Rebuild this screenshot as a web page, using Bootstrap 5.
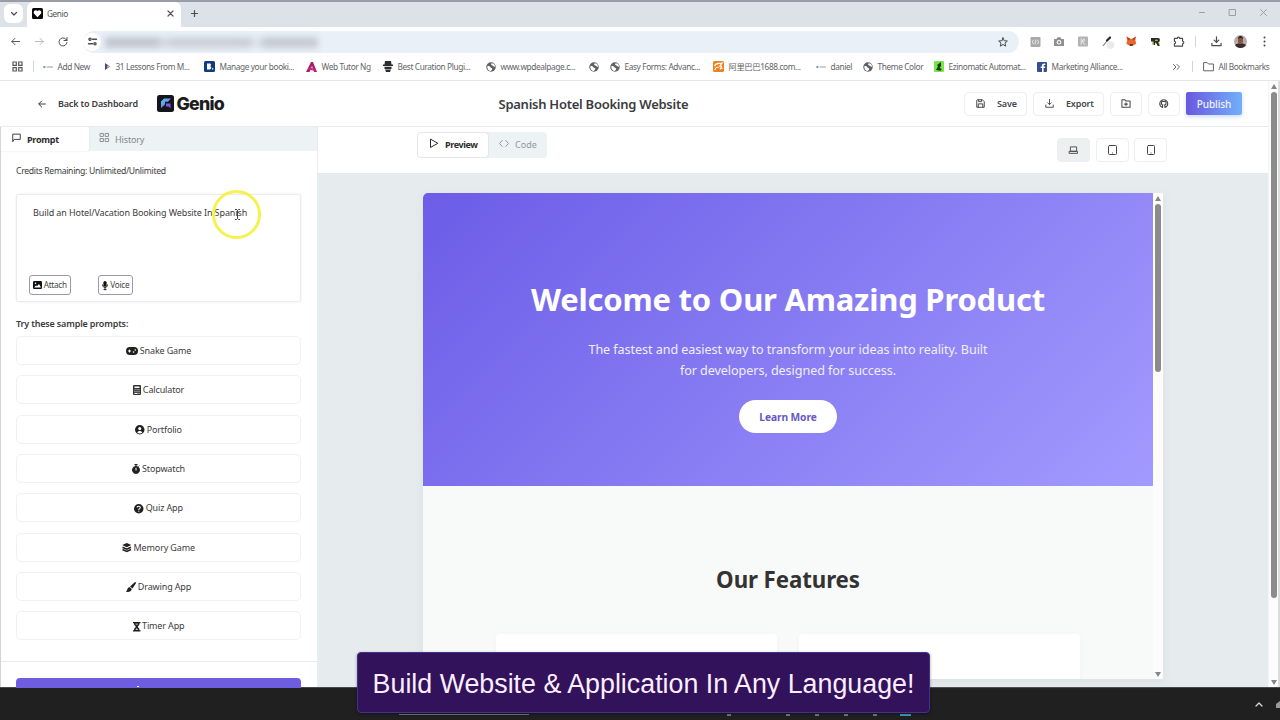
<!DOCTYPE html>
<html lang="en">
<head>
<meta charset="utf-8">
<title>Genio</title>
<link href="https://cdn.jsdelivr.net/npm/bootstrap@5.3.0/dist/css/bootstrap.min.css" rel="stylesheet">
<script src="https://cdn.jsdelivr.net/npm/bootstrap@5.3.0/dist/js/bootstrap.bundle.min.js"></script>
<style>
body{width:1280px;height:720px;overflow:hidden;font-family:"Noto Sans","Noto Sans CJK SC",sans-serif;font-size:9px;line-height:14px;color:#3c3c3c;background:#fff}
svg{display:block;flex:none;overflow:visible}
.ln{fill:none;stroke:currentColor;stroke-width:2;stroke-linecap:round;stroke-linejoin:round}
.browser{border-top:2px solid #9a9da5;height:81px;border-bottom:1px solid #e4e6e8;color:#4a4c4f}
.tabstrip{height:25px;background:#dde1e8}
.tabmenu{width:19px;height:19px;margin:2px 4px 0 4px;background:#fff;border-radius:6px}
.tab-active{width:154px;height:25px;background:#fff;border-radius:6px 6px 0 0;padding:0 8px 2px 5px;font-size:8.3px;letter-spacing:-.45px;color:#555}
.wctl{color:#9b9ea5;width:30.7px}
.wctl.last{width:20px}
.thin{stroke-width:1}
.mid{stroke-width:1.2}
.addr-row{height:29px;padding-left:3px}
.nav-ic{width:24px}
.nav-ic.off{color:#b4b6b9}
.addr{width:936px;height:22px;background:#eaf0f7;border-radius:11px;padding-left:0;padding-right:11px}
.site-ic{width:18px;height:18px;border-radius:50%;background:#fff}
.smudge{width:213px;height:11px;margin:2px 0 0 4px;filter:blur(3px);background:linear-gradient(90deg,#c2c7cf 0 24%,#d5dae2 27% 29%,#ccd1d9 32% 58%,#cbd0d8 60% 68%,#dfe5ec 70% 72%,#c6cbd3 75%)}
.ext-ic{width:24px}
.ext-row{margin-left:4px}
.bookmarks{height:21px;display:grid;grid-template-columns:12px 21px 10px 61px 100px 102px 77px 103px 103px 21px 103px 103px 47px 71px 103px 136px 19px 11px 1fr;font-size:8.3px;letter-spacing:-.38px;color:#626467;white-space:nowrap}
.bookmarks>*{display:flex;align-items:center;gap:4.5px}
.vsep{width:1px;height:11px;background:#cfd6df}
.app-head{height:46px;border-bottom:1px solid #e9eaec;font-weight:600;letter-spacing:-.17px;color:#3a3c3e}
.head-title{font-size:13px;letter-spacing:-.26px;left:498.5px;top:14px;line-height:18px}
.logo-text{font:800 17.8px/20px Inter,sans-serif;letter-spacing:-.8px;color:#1c1d21}
.obtn{height:24px;border:1px solid #eceef1;border-radius:4px;background:#fff;color:#444648}
.publish{width:56px;height:23px;background:linear-gradient(90deg,#6a57dd,#71b0fb);color:#f3f2ff;font-size:10px;font-weight:500;letter-spacing:-.12px;border-radius:2px;box-shadow:0 2px 4px #8ab0ec70}
.work{height:560px}
.side{width:318px;border-left:1px solid #d3d5d8;border-right:1px solid #e9ecee}
.tabs-row{height:24px;background:#edf2f5}
.tab-on{width:88px;background:#fff;box-shadow:0 0 2px #d6dbe0;border-radius:0 0 3px 0;font-weight:700;color:#2c2c2c;letter-spacing:-.25px;padding-top:1px}
.tab-off{color:#83888d;padding:1px 0 0 11px;letter-spacing:-.14px}
.credits{font-size:8.6px;letter-spacing:-.29px}
.prompt-box{height:108px;border:1px solid #eaecf0;border-radius:2px;box-shadow:0 0 2px #e6e8ee;letter-spacing:-.1px}
.mini{height:20px;border:1px solid #9a9ba6;border-radius:3px;font-size:8.2px;letter-spacing:-.27px;color:#444}
.sample{height:29px;border:1px solid #f0f1f3;border-radius:5px;gap:2px;letter-spacing:-.14px;margin-bottom:10.33px;padding-top:1px}
.sample svg{color:#202020}
.gen{height:10px;background:#6f5de0;border-radius:4px 4px 0 0}
.side-foot{border-top:1px solid #e8eaed;padding:16px 16px 0 15px;height:26px}
.view-bar{height:46px;background:#fff}
.seg{height:26px;margin:5px 0 0 99px;background:#edf2f4;border-radius:4px}
.seg-on{width:72px;border:1px solid #e4e7ea;background:#fff;border-radius:4px;font-weight:700;color:#2c2c2c;letter-spacing:-.4px}
.seg-off{width:58px;color:#93989b;padding-left:10px;letter-spacing:0}
.dev{width:33px;height:24px}
.dev.sel{background:#edf0f1}
.stage{background:#e6ebee;height:514px;padding:20px 0 0 105px}
.frame{width:740px;height:486px;background:#f8f9f9;border-radius:5px 0 0 0;overflow:hidden;box-shadow:0 3px 8px #c9ced260}
.hero{width:730px;height:293px;background:linear-gradient(135deg,#6c5ce7,#a29bfe);color:#fff;padding-top:86px}
.hero h1{font-size:31px;line-height:40px;font-weight:700;letter-spacing:-.22px;margin:0 0 19.5px}
.hero p{font-size:12.6px;line-height:21.4px;letter-spacing:-.07px;margin:0 0 18.5px;color:#f0eeff}
.cta{width:98px;height:33px;border-radius:17px;background:#fff;color:#6657c4;font-weight:700;font-size:10.2px;letter-spacing:-.08px;padding-top:1px}
.feat{width:730px;padding-top:78px}
.feat h2{font-size:22.3px;line-height:32px;font-weight:700;letter-spacing:-.1px;margin:0 0 38px;color:#333}
.fcard{width:281px;height:60px;background:#fff;border-radius:4px;box-shadow:0 1px 4px #00000008}
.sb{width:10px;background:#fcfcfc}
.sb.page{border-left:1px solid #f2f4f5}
.thumb{width:6px;border-radius:3px;background:#8b8b8b}
.arr{width:0;height:0;border:3px solid transparent;border-top:0;border-bottom:5px solid #858585}
.arr.dn{transform:rotate(180deg)}
.edge{width:2px;background:#dcdcdc}
.taskbar{height:33px;background:#202021;border-top:1px solid #48494a}
.caption-box{left:357px;top:652px;width:573px;height:61px;border:1px solid #46308a;border-radius:4px;background:#31125b;color:#fceeff;font:26.8px/62px "Liberation Sans",Arial,sans-serif;white-space:nowrap;box-shadow:0 1px 3px #0006}
.click-ring{left:212px;top:190px;width:49px;height:49px;border:3px solid #f4f03c;border-radius:50%;opacity:.9}
.ibeam{left:234px;top:209px}
.tick{height:2px;width:4px;background:#77787a;top:714px}
</style>
</head>
<body>
<svg width="0" height="0" class="position-absolute">
<defs>
<symbol id="globe" viewBox="0 0 16 16"><circle cx="8" cy="8" r="7.6" fill="#5f6164"/><path d="M2 7c2-1 4 0 5 1.500s3 1 3 2.500-2 2-2 3.500C4 14 2 11 2 7zM9 2c3 0 5 2 5.500 5-1.500 1-3 0-3.500-1S8 5 8 4z" fill="#fff"/></symbol>
<symbol id="dash" viewBox="0 0 11 4"><path d="M0 2h3M4 2h7" stroke="#8494a0" stroke-width="1"/><path d="M0 2l2-1.500v3z" fill="#6a8796"/></symbol>
</defs>
</svg>

<header class="browser">
  <div class="tabstrip d-flex">
    <div class="tabmenu d-flex align-items-center justify-content-center"><svg width="6" height="4" viewBox="0 0 6 4" class="ln mid"><path d="M.5.5 3 3 5.500.5"/></svg></div>
    <div class="tab-active d-flex align-items-center">
      <svg width="11" height="11" viewBox="0 0 11 11"><rect width="11" height="11" rx="1.500" fill="#080808"/><path d="M5.500 9.300 1.900 5.400C.8 3.300 3.500 1 5.500 2.900c2-1.900 4.700.4 3.600 2.500z" fill="#fff"/></svg>
      <span class="ms-1">Genio</span>
      <svg class="ms-auto ln mid" width="5" height="5" viewBox="0 0 5 5"><path d="M0 0l5 5M5 0 0 5"/></svg>
    </div>
    <svg class="ln mid align-self-center ms-2" width="9" height="9" viewBox="-2 0 9 9"><path d="M3.500.5v6M.5 3.500h6"/></svg>
    <div class="ms-auto d-flex align-items-center pb-1">
      <div class="wctl"><svg width="7" height="7" viewBox="0 0 7 7" class="ln thin"><path d="M.5 3.500h5"/></svg></div>
      <div class="wctl"><svg width="7" height="7" viewBox="0 0 7 7" class="ln thin"><path d="M.5.5h6v6h-6z"/></svg></div>
      <div class="wctl last"><svg width="7" height="7" viewBox="0 0 7 7" class="ln thin"><path d="M.5.5l6 6m0-6-6 6"/></svg></div>
    </div>
  </div>
  <div class="addr-row d-flex align-items-center">
    <div class="nav-ic d-flex justify-content-center"><svg width="11" height="11" viewBox="0 0 24 24" class="ln"><path d="M21 12H4m7-7-7 7 7 7"/></svg></div>
    <div class="nav-ic off d-flex justify-content-center"><svg width="11" height="11" viewBox="0 0 24 24" class="ln"><path d="M3 12h17m-7-7 7 7-7 7"/></svg></div>
    <div class="nav-ic d-flex justify-content-center"><svg width="12" height="12" viewBox="0 0 24 24" class="ln"><path d="M20 13a8 8 0 1 1-2.500-7L20 8.500M20 3v6h-6"/></svg></div>
    <div class="addr d-flex align-items-center ms-2">
      <div class="site-ic d-flex align-items-center justify-content-center"><svg width="9" height="9" viewBox="0 0 20 20" class="ln"><circle cx="4.500" cy="5" r="2.500" stroke-width="2.800"/><path d="M10 5h9M1 15h9" stroke-width="2.800"/><circle cx="15.500" cy="15" r="2.500" stroke-width="2.800"/></svg></div>
      <div class="smudge"></div>
      <svg class="ms-auto ln" width="10" height="10" viewBox="0 0 24 24"><path d="m12 2 3 7 7.500.6-5.700 5 1.700 7.400-6.500-4-6.500 4 1.700-7.400-5.700-5L9 9z" stroke-width="2.400"/></svg>
    </div>
    <div class="ext-row d-flex align-items-center">
      <div class="ext-ic d-flex justify-content-center"><svg width="11" height="10" viewBox="0 0 11 11"><rect width="11" height="11" rx="1" fill="#a9a9ab"/><path d="M3.500 3 2 5.500 3.500 8M7.500 3 9 5.500 7.500 8M6 3 5 8" stroke="#eee" fill="none"/></svg></div>
      <div class="ext-ic d-flex justify-content-center"><svg width="10" height="9" viewBox="0 0 10 9"><path d="M0 2h2.500L3.500.3h3L7.500 2H10v7H0z" fill="#8e9092"/><circle cx="5" cy="5.200" r="2.300" fill="#fff"/><circle cx="5" cy="5.200" r="1.200" fill="#8e9092"/></svg></div>
      <div class="ext-ic d-flex justify-content-center"><svg width="10" height="11" viewBox="0 0 11 11"><rect width="11" height="11" rx="1" fill="#b3b3b4"/><path d="M3.500 2v7M4 5.500l2.500-3 1 2-3 1.500 3.500 3" stroke="#eee" fill="none"/></svg></div>
      <div class="ext-ic d-flex justify-content-center"><svg width="11" height="12" viewBox="0 0 11 12"><circle cx="8.500" cy="9" r="3.800" fill="#e9eaec"/><path d="M1 10 6 3.500" stroke="#7a8795" stroke-width="1.200"/><path d="M5 4.500 8 1.500" stroke="#25282c" stroke-width="2.200" stroke-linecap="round"/></svg></div>
      <div class="ext-ic d-flex justify-content-center"><svg width="10.500" height="10.500" viewBox="0 0 11 11"><path d="M.5.500 4.300 3h2.400L10.500.500l-.7 4 .9 3.500-3 2H3.300l-3-2 .9-3.500z" fill="#e8682b"/><path d="M.5.500 4.300 3 3 5zM10.500.500 6.700 3 8 5z" fill="#a8401a"/><path d="M4 8.500h3v1.800H4z" fill="#4a2a20"/></svg></div>
      <div class="ext-ic d-flex justify-content-center"><svg width="9" height="9" viewBox="0 0 10 10"><path d="M1 5h3l-2.500 4H1zM8 6l2 1v3H8z" fill="#bfd843"/><path d="M0 1h7.500c2 0 2.500 1 2.300 2.500S9 5.800 8 6l1.500 4h-2L5.500 6.500H4.700L4.500 9H2.800V5H0z" fill="#272d20"/><path d="M4.500 3h3v1.300h-3z" fill="#b9c0b5"/></svg></div>
      <div class="ext-ic d-flex justify-content-center"><svg width="11.500" height="11.500" viewBox="0 0 24 24" class="ln"><path d="M3 5h6a2.500 2.500 0 0 1 5 0h6v6a2.500 2.500 0 0 1 0 5v5H3v-5a2.500 2.500 0 0 0 0-5z" stroke-width="2.400"/></svg></div>
      <div class="vsep mx-1"></div>
      <div class="ext-ic d-flex justify-content-center ms-1"><svg width="11" height="11" viewBox="0 0 24 24" class="ln"><path d="M12 2v12m-5-5 5 5 5-5M2 16v5h20v-5" stroke-width="2.600"/></svg></div>
      <div class="ext-ic d-flex justify-content-center"><svg width="13" height="13" viewBox="0 0 13 13"><circle cx="6.500" cy="6.500" r="6.500" fill="#b9aca6"/><path d="M1 10c2-2.500 9-2.500 11 0-2 4-9 4-11 0z" fill="#3a2b30"/><ellipse cx="6.500" cy="5.300" rx="2.600" ry="3.600" fill="#8a5747"/><path d="M3.800 4C4 0 9 0 9.200 4 8 2.500 5 2.500 3.800 4z" fill="#2b2020"/></svg></div>
      <div class="ext-ic d-flex justify-content-center"><svg width="3" height="11" viewBox="0 0 3 11" fill="#444"><circle cx="1.500" cy="1.500" r="1"/><circle cx="1.500" cy="5.500" r="1"/><circle cx="1.500" cy="9.500" r="1"/></svg></div>
    </div>
  </div>
  <nav class="bookmarks">
    <span></span>
    <span><svg width="11" height="11" viewBox="0 0 11 11" fill="none" stroke="#55575a" stroke-width="1.200"><path d="M1 1h3.300v3.300H1zM6.700 1H10v3.300H6.700zM1 6.700h3.300V10H1zM6.700 6.700H10V10H6.700z"/></svg></span>
    <span><i class="vsep"></i></span>
    <span><svg width="10" height="4"><use href="#dash"/></svg>Add New</span>
    <span><svg width="7" height="7" viewBox="0 0 7 7"><path d="M1 0l5 3.500L1 7z" fill="#4d3ea8"/><path d="M3 2.500 6 3.500 3 5z" fill="#f1b52c"/></svg>31 Lessons From M...</span>
    <span><svg width="11" height="11" viewBox="0 0 11 11"><rect width="11" height="11" rx="1.500" fill="#113a80"/><path d="M3 2.500h2.400c2 0 2 2.300.6 2.700 2 .5 1.500 3.300-.7 3.300H3zM8 7.200h1.300v1.300H8z" fill="#fff"/></svg>Manage your booki...</span>
    <span><svg width="11" height="10" viewBox="0 0 11 10"><path d="M0 10 5 0h2l4 10H8L6 4 3.500 10z" fill="#a81f68"/><path d="M2 6c3-1 6 0 8 3L4 8z" fill="#cf2e7d"/></svg>Web Tutor Ng</span>
    <span><svg width="10" height="11" viewBox="0 0 10 11" fill="#2c2d2f"><path d="M2 0h6l.5 3.500H10V5H0V3.500h1.500zM1.500 5.700h7V8h-7zM2 8.500h6L7 11H3z"/></svg>Best Curation Plugi...</span>
    <span><svg width="10" height="10"><use href="#globe"/></svg>www.wpdealpage.c...</span>
    <span><svg width="10" height="10"><use href="#globe"/></svg></span>
    <span><svg width="10" height="10"><use href="#globe"/></svg>Easy Forms: Advanc...</span>
    <span><svg width="11" height="11" viewBox="0 0 11 11"><rect width="11" height="11" rx="1.500" fill="#ee8223"/><path d="M1.500 5C3 1.500 6 3 9 2L7 5c2-.5 2 1 0 3l2.500-1M2 9c0-2 2-3 4-3" fill="none" stroke="#fff" stroke-width="1.200"/></svg>阿里巴巴1688.com...</span>
    <span><svg width="10" height="4"><use href="#dash"/></svg>daniel</span>
    <span><svg width="10" height="10"><use href="#globe"/></svg>Theme Color</span>
    <span><svg width="10" height="11" viewBox="0 0 10 11"><rect width="10" height="11" rx="1" fill="#7ce34c"/><path d="M7 1 3 4l1 1.500L2 9l5 .7.7-2L5.500 7 7 5z" fill="#163d12"/></svg>Ezinomatic Automat...</span>
    <span><svg width="10" height="10" viewBox="0 0 10 10"><rect width="10" height="10" rx="1" fill="#34508f"/><path d="M5 10V6H3.700V4.600H5V3.500C5 2 6 1.300 8.300 1.700V3c-1.300-.1-1.700 0-1.700 1.600h1.600L8 6H6.600v4z" fill="#fff"/></svg>Marketing Alliance...</span>
    <span><svg width="7" height="6" viewBox="0 0 7 6" class="ln thin"><path d="M.5.500 3 3 .5 5.500M4 .500 6.500 3 4 5.500"/></svg></span>
    <span><i class="vsep"></i></span>
    <span><svg width="11" height="9" viewBox="0 0 11 9" class="ln thin"><path d="M.6 8.400V.600h3.600L5.500 2h4.900v6.400z"/></svg>All Bookmarks</span>
  </nav>
</header>

<div class="d-flex">
<main style="width:1268px">
  <div class="app-head d-flex align-items-center position-relative">
    <svg class="ln" width="8" height="8" viewBox="0 0 24 24" style="margin-left:38px"><path d="M22 12H3m8-9-9 9 9 9" stroke-width="3"/></svg>
    <span style="margin-left:12px;width:99px">Back to Dashboard</span>
    <svg width="17" height="17" viewBox="0 0 17 17"><defs><linearGradient id="lg" x1="0" y1="0" x2="1" y2="1"><stop offset=".2" stop-color="#56b9ec"/><stop offset="1" stop-color="#8d4fe0"/></linearGradient></defs><rect width="17" height="17" rx="2.500" fill="#14151d"/><path d="M4 13V6.500L7 3.500h7l-3 3.300H8V9.500z" fill="url(#lg)"/><path d="M9 8.500h4.500V13.500L11.500 11.500H9z" fill="#7e5be4"/></svg>
    <span class="logo-text" style="margin-left:2.500px">Genio</span>
    <div class="head-title position-absolute">Spanish Hotel Booking Website</div>
    <div class="ms-auto d-flex align-items-center" style="margin-right:26px;gap:6px">
      <div class="obtn d-flex align-items-center" style="width:63px;padding-left:11px"><svg class="ln" width="9" height="9" viewBox="0 0 24 24"><path d="M4 2h13l5 5v15H2V4zM7 2v5h8V2M6 22v-9h12v9" stroke-width="2.600"/></svg><span style="margin-left:12px">Save</span></div>
      <div class="obtn d-flex align-items-center" style="width:71px;padding-left:11px"><svg class="ln" width="9" height="9" viewBox="0 0 24 24"><path d="M12 1v14m-5-5 5 5 5-5M2 16v6h20v-6" stroke-width="2.500"/></svg><span style="margin-left:12px">Export</span></div>
      <div class="obtn d-flex align-items-center justify-content-center" style="width:32px"><svg class="ln" width="10" height="9" viewBox="0 0 24 22"><path d="M2 20V2h7l3 3h10v15zM12 9v7m-3.500-3.500h7" stroke-width="2.500"/></svg></div>
      <div class="obtn d-flex align-items-center justify-content-center" style="width:32px"><svg width="9.500" height="9.500" viewBox="0 0 24 24" class="ln"><path d="M9 21.500C5 20 2 17 2 12a10 10 0 0 1 20 0c0 5-3 8-7 9.500V18c0-1.500-.5-2.500-1-3 3-.5 4-2 4-4.500 0-1.500-.5-2.500-1-3V5l-3 1.300h-4L7 5v2.500c-.5.500-1 1.500-1 3C6 13 7 14.500 10 15c-.5.500-1 1.500-1 3z" fill="none" stroke-width="2.800"/></svg></div>
      <div class="publish d-flex align-items-center justify-content-center">Publish</div>
    </div>
  </div>

  <div class="work d-flex">
    <aside class="side d-flex flex-column">
      <div class="tabs-row d-flex">
        <div class="tab-on d-flex align-items-center"><svg class="ln" width="9" height="9" viewBox="0 0 24 24" style="margin:-5px 6px 0 11px"><path d="M2 22V3h20v14H7z" stroke-width="2.400"/></svg>Prompt</div>
        <div class="tab-off d-flex align-items-center"><svg class="ln thin" width="9" height="9" viewBox="0 0 10 10" style="margin:-5px 6px 0 0"><path d="M.5.500h3.300v3.300H.500zM6.200.500h3.300v3.300H6.200zM.5 6.200h3.300v3.300H.500zM6.200 6.200h3.300v3.300H6.200z"/></svg>History</div>
      </div>
      <div style="padding:13px 16px 0 15px">
        <div class="credits">Credits Remaining: Unlimited/Unlimited</div>
        <div class="prompt-box d-flex flex-column justify-content-between" style="margin-top:16px;padding:10.500px 12px 6px">
          <div style="padding-left:4px">Build an Hotel/Vacation Booking Website In Spanish</div>
          <div class="d-flex">
            <div class="mini d-flex align-items-center justify-content-center" style="width:42px;gap:1.500px"><svg width="9" height="8" viewBox="0 0 9 8"><rect width="9" height="8" rx="1.200" fill="#111"/><path d="M1.200 6.500 3 4.300l1 1L6 3l2 3.500z" fill="#fff"/><circle cx="2.500" cy="2.300" r=".8" fill="#fff"/></svg>Attach</div>
            <div class="mini d-flex align-items-center justify-content-center" style="width:35px;margin-left:27px;gap:2.500px"><svg width="6" height="9" viewBox="0 0 6 9"><rect x="1.400" width="3.200" height="5.800" rx="1.600" fill="#111"/><path d="M.5 3.500c0 4 5 4 5 0M3 6.500V9M1.500 8.600h3" stroke="#111" fill="none" stroke-width=".9"/></svg>Voice</div>
          </div>
        </div>
        <div style="margin:15px 0 5px;font-weight:600;letter-spacing:-.17px">Try these sample prompts:</div>
        <div class="sample d-flex align-items-center justify-content-center"><svg width="12" height="8" viewBox="0 0 12 8"><rect width="12" height="8" rx="4" fill="currentColor"/><path d="M2 4h3M3.500 2.500v3" stroke="#fff"/><circle cx="7.500" cy="5" r=".8" fill="#fff"/><circle cx="9.300" cy="3" r=".8" fill="#fff"/></svg>Snake Game</div>
        <div class="sample d-flex align-items-center justify-content-center"><svg width="8" height="10" viewBox="0 0 8 10"><rect width="8" height="10" rx="1" fill="#333"/><path d="M1.500 1.500h5V3h-5zM1.500 4.200h1v1h-1zm2 0h1v1h-1zm2 0h1v1h-1zm-4 2h1v1h-1zm2 0h1v1h-1zm2 0h1v1h-1zm-4 1.800h3v1h-3zm4 0h1v1h-1z" fill="#fff"/></svg>Calculator</div>
        <div class="sample d-flex align-items-center justify-content-center"><svg width="9.500" height="9.500" viewBox="0 0 10 10"><circle cx="5" cy="5" r="5" fill="currentColor"/><circle cx="5" cy="3.800" r="1.600" fill="#fff"/><path d="M2.300 8c.5-2.300 4.900-2.300 5.400 0-1.500 1.300-3.900 1.300-5.400 0z" fill="#fff"/></svg>Portfolio</div>
        <div class="sample d-flex align-items-center justify-content-center"><svg width="8" height="10" viewBox="0 0 8 10"><path d="M2.500 0h3v1.200h-1v.8a4 4 0 1 1-1 0v-.8h-1z" fill="currentColor"/><path d="M6.500 2.500 7.300 1.700" stroke="currentColor"/><path d="M4 3.800V6.500" stroke="#fff"/></svg>Stopwatch</div>
        <div class="sample d-flex align-items-center justify-content-center"><svg width="9.500" height="9.500" viewBox="0 0 10 10"><circle cx="5" cy="5" r="5" fill="currentColor"/><path d="M3.300 3.700C3.300 1.800 6.800 2 6.600 3.900 6.500 4.900 5 4.800 5 6.200M5 7v1.100" stroke="#fff" fill="none" stroke-width="1.100"/></svg>Quiz App</div>
        <div class="sample d-flex align-items-center justify-content-center"><svg width="9.500" height="9" viewBox="0 0 10 10"><path d="M5 0l5 2.300-5 2.300L0 2.300z" fill="currentColor"/><path d="M.3 4.700 5 6.800l4.700-2.100M.3 7.200 5 9.300l4.700-2.100" fill="none" stroke="currentColor" stroke-width="1.700"/></svg>Memory Game</div>
        <div class="sample d-flex align-items-center justify-content-center"><svg width="10" height="10" viewBox="0 0 10 10" fill="currentColor"><path d="M9 0c1 0 1.200.8.8 1.600L6.500 6.500 4 4.500zM3.500 5l2.300 2C5.500 9.500 2.500 10.500 0 9.700 1.500 9 .5 6.500 3.500 5z"/></svg>Drawing App</div>
        <div class="sample d-flex align-items-center justify-content-center"><svg width="7.500" height="9.500" viewBox="0 0 8 10"><path d="M0 0h8v1.300H7C7 3.500 5.500 4 5 5c.5 1 2 1.500 2 3.700h1V10H0V8.700h1C1 6.500 2.500 6 3 5 2.500 4 1 3.500 1 1.300H0z" fill="currentColor"/><path d="M2.500 1.700h3L5 2.600H3zM2.500 8.300 4 6.600l1.500 1.700z" fill="#fff"/></svg>Timer App</div>
      </div>
      <div class="side-foot mt-auto"><div class="gen d-flex justify-content-center"><svg width="50" height="10" viewBox="0 0 50 10"><path d="M3 8.500h2" stroke="#fff"/></svg></div></div>
    </aside>

    <section style="width:950px">
      <div class="view-bar d-flex">
        <div class="seg d-flex">
          <div class="seg-on d-flex align-items-center"><svg class="ln thin" width="8" height="9" viewBox="0 0 8 9" style="margin:-4px 7px 0 12px"><path d="M.5.500v8l7-4z"/></svg>Preview</div>
          <div class="seg-off d-flex align-items-center"><svg class="ln thin" width="10" height="7" viewBox="0 0 10 7" style="margin:-4px 6px 0 0"><path d="M3.200.5.500 3.500l2.700 3M6.800.500l2.700 3-2.700 3"/></svg>Code</div>
        </div>
        <div class="ms-auto d-flex" style="gap:5.500px;margin:10.500px 101px 0 0">
          <div class="obtn dev sel d-flex align-items-center justify-content-center"><svg class="ln thin" width="9" height="8" viewBox="0 0 10 9"><path d="M1.500 5.500V1h7v4.500zM.5 6h9v2.300h-9z"/></svg></div>
          <div class="obtn dev d-flex align-items-center justify-content-center"><svg class="ln thin" width="9" height="10" viewBox="0 0 9 10"><rect x=".5" y=".500" width="8" height="9" rx="1"/><path d="M4.500 8h.1"/></svg></div>
          <div class="obtn dev d-flex align-items-center justify-content-center"><svg class="ln thin" width="8" height="10" viewBox="0 0 8 10"><rect x=".5" y=".500" width="7" height="9" rx="1"/><path d="M4 8h.1"/></svg></div>
        </div>
      </div>
      <div class="stage">
        <div class="frame d-flex">
          <div>
            <div class="hero d-flex flex-column align-items-center text-center">
              <h1>Welcome to Our Amazing Product</h1>
              <p>The fastest and easiest way to transform your ideas into reality. Built<br>for developers, designed for success.</p>
              <div class="cta d-flex align-items-center justify-content-center">Learn More</div>
            </div>
            <div class="feat text-center">
              <h2>Our Features</h2>
              <div class="d-flex justify-content-center" style="gap:22px"><div class="fcard"></div><div class="fcard"></div></div>
            </div>
          </div>
          <div class="sb d-flex flex-column align-items-center" style="padding:3px 0 2px"><i class="arr"></i><i class="thumb" style="height:168px;margin-top:3px"></i><i class="arr dn mt-auto"></i></div>
        </div>
      </div>
    </section>
  </div>
</main>
<div class="sb page d-flex flex-column align-items-center" style="padding:3px 0 2px"><i class="arr"></i><i class="thumb" style="height:506px;margin-top:3px"></i><i class="arr dn mt-auto"></i></div>
<div class="edge"></div>
</div>

<footer class="taskbar d-flex align-items-center justify-content-end"><svg class="ln mid" width="8" height="5" viewBox="0 0 8 5" style="color:#ddd;margin-right:13px"><path d="M1 4 4 1l3 3"/></svg><svg width="4" height="7" viewBox="0 0 4 7" fill="#999"><path d="M4 0 0 3v4h4z"/></svg></footer>

<div class="position-absolute click-ring"></div>
<svg class="position-absolute ibeam" width="7" height="11" viewBox="0 0 7 11" fill="none" stroke="#444"><path d="M1 .500h1.500l1 1 1-1H6M3.500 1.500v8M1 10.500h1.500l1-1 1 1H6"/></svg>
<div class="position-absolute tick" style="left:399px;width:130px;height:1px"></div>
<div class="position-absolute tick" style="left:727px"></div>
<div class="position-absolute tick" style="left:786px"></div>
<div class="position-absolute tick" style="left:815px"></div>
<div class="position-absolute tick" style="left:844px"></div>
<div class="position-absolute tick" style="left:873px"></div>
<div class="position-absolute tick" style="left:900px;width:11px;background:#3f9bc4"></div>
<div class="position-absolute caption-box text-center">Build Website &amp; Application In Any Language!</div>
</body>
</html>
